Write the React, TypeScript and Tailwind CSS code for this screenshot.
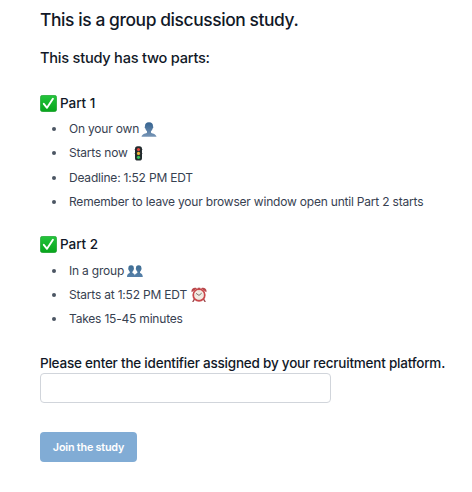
import type { ReactNode } from 'react';

function CheckIcon() {
  return (
    <svg className="mr-[3px] h-[17px] w-[17px] shrink-0" viewBox="0 0 17 17">
      <defs>
        <linearGradient id="check" x1="0" y1="0" x2="0" y2="1">
          <stop offset="0" stopColor="#24c43c" />
          <stop offset="1" stopColor="#08a51c" />
        </linearGradient>
      </defs>
      <rect x="0.3" y="0.3" width="16.4" height="16.4" rx="2.4" fill="url(#check)" stroke="#159a28" strokeWidth="0.6" />
      <path d="M3.8 8.8 L7 12.8 L12.9 3.7" fill="none" stroke="#fff" strokeWidth="1.9" strokeLinecap="round" strokeLinejoin="round" />
    </svg>
  );
}

function PersonIcon() {
  return (
    <svg className="ml-[2px] h-[15px] w-[16px]" viewBox="0 0 16 15">
      <defs>
        <linearGradient id="person" x1="0" y1="0" x2="0" y2="1">
          <stop offset="0" stopColor="#34628f" />
          <stop offset="1" stopColor="#7795b6" />
        </linearGradient>
      </defs>
      <path d="M8 .2C5.1.2 3.8 2 4 4.5c-.6.2-.4 1.7.4 2 .3 1.3.9 2.1 1.6 2.7v1.2C5.6 11.6 1 11.3.5 14.8h15c-.5-3.5-5.1-3.2-5.5-4.4V9.2c.7-.6 1.3-1.4 1.6-2.7.8-.3 1-1.8.4-2C12.2 2 10.9.2 8 .2Z" fill="url(#person)" />
    </svg>
  );
}

function GroupIcon() {
  const bust = 'M4.1 0C2.1 0 1.2 1.3 1.4 3c-.4.2-.2 1.2.2 1.4.2 1 .7 1.6 1.2 2v1.1C2.3 8.5.2 8.1 0 11.6h8.2C8 8.1 5.9 8.5 5.4 7.5V6.4c.5-.4 1-1 1.2-2 .4-.2.6-1.2.2-1.4C7 1.3 6.1 0 4.1 0Z';
  return (
    <svg className="ml-[3px] h-[12px] w-[16px]" viewBox="0 0 16 12">
      <defs>
        <linearGradient id="group" x1="0" y1="0" x2="0" y2="1">
          <stop offset="0" stopColor="#3f6e94" />
          <stop offset="1" stopColor="#557fa8" />
        </linearGradient>
      </defs>
      <path d={bust} transform="translate(0 .3)" fill="url(#group)" />
      <path d={bust} transform="translate(7.6 .3)" fill="url(#group)" />
    </svg>
  );
}

function TrafficLightIcon() {
  return (
    <svg className="ml-[6px] h-[15px] w-[9px]" viewBox="0 0 9 15">
      <path d="M.4 3h8.2L7 6H2ZM.4 7h8.2l-1.6 3H2Z" fill="#4b5157" />
      <rect x="1" y="0.3" width="7" height="14.2" rx="2.6" fill="#222b2e" />
      <circle cx="4.5" cy="3.5" r="1.6" fill="#e8463c" />
      <circle cx="4.5" cy="7.4" r="1.6" fill="#f0b93a" />
      <circle cx="4.5" cy="11.3" r="1.6" fill="#35c45a" />
    </svg>
  );
}

function AlarmIcon() {
  return (
    <svg className="ml-[4px] h-[15px] w-[16px]" viewBox="0 0 16 15">
      <path d="M3.3 12.4 2 14.5M12.7 12.4 14 14.5" stroke="#98464a" strokeWidth="1.4" strokeLinecap="round" />
      <path d="M.7 5.2C-.4 2.2 2.6-.4 6 1.2ZM15.3 5.2c1.1-3-1.9-5.6-5.3-4Z" fill="#b8474b" />
      <path d="M6.7 2V.7h2.6V2" fill="#a05055" />
      <circle cx="8" cy="8" r="5.8" fill="#f3ebe2" stroke="#c9484b" strokeWidth="1.7" />
      <path d="M5.4 6.6 8 8.4 10.4 6.4" fill="none" stroke="#6d6260" strokeWidth="0.9" strokeLinecap="round" />
      <path d="M8 3.6v.8M8 11.8v.8M3.7 8h.6M11.8 8h.6" stroke="#a99990" strokeWidth="0.6" />
    </svg>
  );
}

function Item({ children }: { children: ReactNode }) {
  return (
    <li className="flex h-[24.25px] items-center">
      <span className="mr-[13px] h-[4px] w-[4px] rounded-full bg-[#4b5563]" />
      {children}
    </li>
  );
}

function Part({ title, children }: { title: string; children: ReactNode }) {
  return (
    <section>
      <h3 className="flex h-6 items-center text-[13.5px] font-medium tracking-[-0.05px]">
        <CheckIcon />
        {title}
      </h3>
      <ul className="mt-[2px] pl-[12px] text-[12px] tracking-[-0.2px] text-[#374151]">{children}</ul>
    </section>
  );
}

export default function App() {
  return (
    <main className="min-h-[492px] bg-white pl-10 pt-[6px] font-['Inter',sans-serif] whitespace-nowrap text-[#111827]">
      <h1 className="h-7 text-[17.4px] leading-7 font-medium tracking-[-0.4px]">This is a group discussion study.</h1>
      <h2 className="mt-3 h-6 text-[14.6px] leading-6 font-medium tracking-[-0.24px]">This study has two parts:</h2>
      <div className="mt-[21px] flex flex-col gap-[18.6px]">
        <Part title="Part 1">
          <Item>On your own<PersonIcon /></Item>
          <Item>Starts now<TrafficLightIcon /></Item>
          <Item>Deadline: 1:52 PM EDT</Item>
          <Item>Remember to leave your browser window open until Part 2 starts</Item>
        </Part>
        <Part title="Part 2">
          <Item>In a group<GroupIcon /></Item>
          <Item>Starts at 1:52 PM EDT<AlarmIcon /></Item>
          <Item>Takes 15-45 minutes</Item>
        </Part>
      </div>
      <label htmlFor="identifier" className="mt-[20.4px] block h-[21px] text-[13.5px] leading-[22px] font-medium tracking-[-0.22px]">
        Please enter the identifier assigned by your recruitment platform.
      </label>
      <input id="identifier" className="block h-[30px] w-[291px] rounded-[4px] border border-[#d1d5db] bg-white px-2 outline-none" />
      <button className="mt-[29px] block h-[30px] w-[97px] rounded-[4px] bg-[#81acd5] pt-[2px] text-[10.8px] font-semibold tracking-[-0.2px] text-white">
        Join the study
      </button>
    </main>
  );
}
